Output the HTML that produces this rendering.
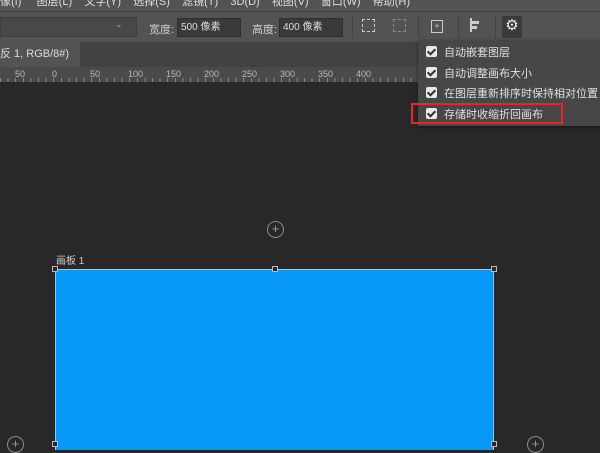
<!DOCTYPE html>
<html><head><meta charset="utf-8"><style>
*{margin:0;padding:0;box-sizing:border-box}
body{width:600px;height:450px;overflow:hidden;background:#282828;position:relative;font-family:"Liberation Sans","Noto Sans CJK SC",sans-serif;color:#cfcfcf;font-size:11px}
.a{position:absolute}
.menu{left:0;top:0;width:600px;height:12px;background:#535353;border-bottom:1px solid #3a3a3a;font-size:11px;line-height:4px;white-space:nowrap;color:#ddd}
.tb{left:0;top:12px;width:600px;height:30px;background:#535353}
.inp{background:#3a3a3a;border:1px solid #2e2e2e;height:19px;top:18px;line-height:17px;padding-left:3px;color:#ddd;font-size:10px}
.tabs{left:0;top:42px;width:600px;height:25px;background:#424242}
.ruler{left:0;top:67px;width:600px;height:15px;background:#4a4a4a;font-size:9px;color:#bbb}
.menu2{left:418px;top:40px;width:182px;height:86px;background:#474747;box-shadow:0 1px 3px #0008}
.it{position:absolute;left:8px;font-size:11px;color:#e0e0e0;white-space:nowrap}
.cb{display:inline-block;width:11px;height:11px;background:#e8e8e8;border-radius:2px;vertical-align:-1px;margin-right:7px;position:relative}
.cb:after{content:"";position:absolute;left:3px;top:1px;width:3px;height:6px;border:solid #333;border-width:0 2px 2px 0;transform:rotate(45deg)}
.plus{width:17px;height:17px;border:1px solid #8a8a8a;border-radius:50%;color:#999;font-size:13px;line-height:14px;text-align:center}
.h{width:6px;height:6px;border:1px solid #bbb;background:#282828}
</style></head><body>
<div class="a menu">像(I)&nbsp;&nbsp;&nbsp;&nbsp;&nbsp;图层(L)&nbsp;&nbsp;&nbsp;&nbsp;文字(Y)&nbsp;&nbsp;&nbsp;&nbsp;选择(S)&nbsp;&nbsp;&nbsp;&nbsp;滤镜(T)&nbsp;&nbsp;&nbsp;&nbsp;3D(D)&nbsp;&nbsp;&nbsp;&nbsp;视图(V)&nbsp;&nbsp;&nbsp;&nbsp;窗口(W)&nbsp;&nbsp;&nbsp;&nbsp;帮助(H)</div>
<div class="a tb"></div>
<div class="a" style="left:0;top:17px;width:137px;height:20px;background:#484848;border:1px solid #3e3e3e"></div>
<div class="a" style="left:115px;top:19px;color:#aaa;font-size:9px">⌄</div>
<div class="a" style="left:149px;top:21px;font-size:11px">宽度:</div>
<div class="a inp" style="left:177px;width:64px">500 像素</div>
<div class="a" style="left:252px;top:21px;font-size:11px">高度:</div>
<div class="a inp" style="left:279px;width:64px">400 像素</div>
<div class="a" style="left:352px;top:16px;width:1px;height:22px;background:#444"></div>
<div class="a" style="left:362px;top:19px;width:13px;height:13px;border:1px dashed #ccc"></div>
<div class="a" style="left:393px;top:19px;width:13px;height:13px;border:1px dashed #888"></div>
<div class="a" style="left:418px;top:16px;width:1px;height:22px;background:#444"></div>
<div class="a" style="left:431px;top:20px;width:12px;height:13px;border:1px solid #ccc;font-size:9px;line-height:10px;text-align:center">+</div>
<div class="a" style="left:458px;top:16px;width:1px;height:22px;background:#444"></div>
<div class="a" style="left:470px;top:18px;width:2px;height:14px;background:#ccc"></div>
<div class="a" style="left:472px;top:21px;width:7px;height:3px;background:#ccc"></div>
<div class="a" style="left:472px;top:26px;width:5px;height:3px;background:#ccc"></div>
<div class="a" style="left:495px;top:16px;width:1px;height:22px;background:#444"></div>
<div class="a" style="left:502px;top:16px;width:20px;height:22px;background:#3a3a3a;color:#eee;font-size:15px;text-align:center;line-height:20px">⚙</div>
<div class="a tabs"></div>
<div class="a" style="left:0;top:42px;width:80px;height:25px;background:#535353;font-size:11px;line-height:25px;color:#ddd">反 1, RGB/8#) *&nbsp;&nbsp;<span style="color:#aaa">×</span></div>
<div class="a ruler">
<span class="a" style="left:15px;top:2px">50</span><span class="a" style="left:52px;top:2px">0</span><span class="a" style="left:90px;top:2px">50</span><span class="a" style="left:128px;top:2px">100</span><span class="a" style="left:166px;top:2px">150</span><span class="a" style="left:204px;top:2px">200</span><span class="a" style="left:242px;top:2px">250</span><span class="a" style="left:280px;top:2px">300</span><span class="a" style="left:318px;top:2px">350</span><span class="a" style="left:356px;top:2px">400</span>
<div class="a" style="left:0;top:11px;width:600px;height:4px;background:repeating-linear-gradient(90deg,#888 0 1px,transparent 1px 7.6px)"></div>
</div>
<div class="a" style="left:55px;top:269px;width:439px;height:181px;background:#0898f8;border-left:1px solid #bbb;border-top:1px solid #bbb;border-right:1px solid #bbb"></div>
<div class="a" style="left:56px;top:252px;font-size:10px;color:#ccc">画板 1</div>
<div class="a h" style="left:52px;top:266px"></div>
<div class="a h" style="left:272px;top:266px"></div>
<div class="a h" style="left:491px;top:266px"></div>
<div class="a h" style="left:52px;top:441px"></div>
<div class="a h" style="left:491px;top:441px"></div>
<div class="a plus" style="left:267px;top:221px">+</div>
<div class="a plus" style="left:7px;top:436px">+</div>
<div class="a plus" style="left:527px;top:436px">+</div>
<div class="a menu2">
<div class="it" style="top:4px"><span class="cb"></span>自动嵌套图层</div>
<div class="it" style="top:25px"><span class="cb"></span>自动调整画布大小</div>
<div class="it" style="top:45px"><span class="cb"></span>在图层重新排序时保持相对位置</div>
<div class="it" style="top:66px"><span class="cb"></span>存储时收缩折回画布</div>
</div>
<div class="a" style="left:411px;top:103px;width:152px;height:21px;border:2px solid #e8262a"></div>
</body></html>
